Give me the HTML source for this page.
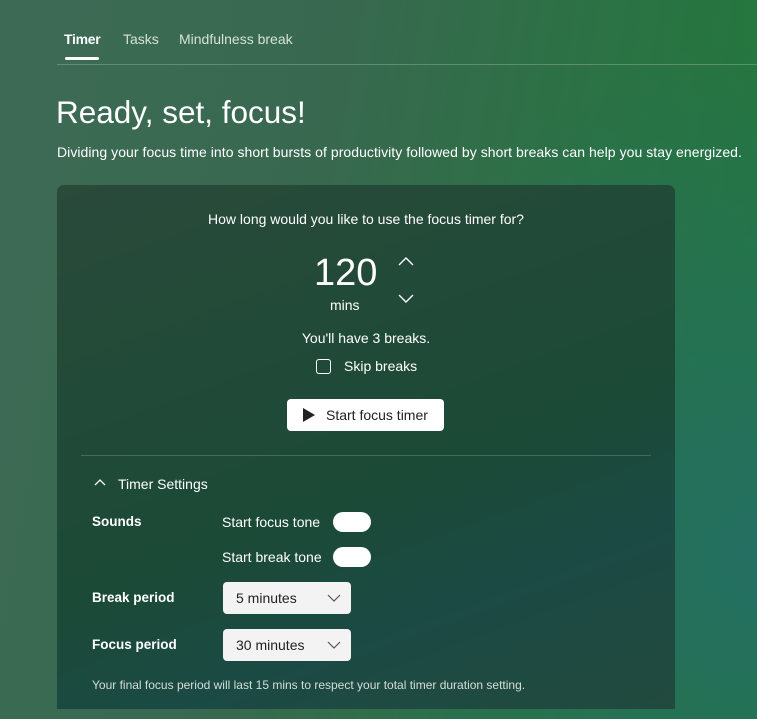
<!DOCTYPE html>
<html><head><meta charset="utf-8"><style>
*{margin:0;padding:0;box-sizing:border-box}
body{width:757px;height:719px;overflow:hidden;font-family:"Liberation Sans",sans-serif;color:#fff;
background:radial-gradient(ellipse 420px 520px at 757px 560px,rgba(36,110,100,0.95),rgba(36,110,100,0) 100%),
linear-gradient(100deg,#3d6a55 0%,#38694f 40%,#2b7244 70%,#21793a 100%);position:relative}
.abs{position:absolute}
.tab{position:absolute;top:31px;font-size:14px}
.line{position:absolute;left:57px;right:0;top:64px;height:1px;background:rgba(255,255,255,0.22)}
.card{position:absolute;left:57px;top:185px;width:618px;height:524px;border-radius:7px 7px 0 0;
background:linear-gradient(160deg,#2a4a3a 0%,#1b4a36 55%,#1b4a44 75%,#224a3e 100%)}
.toggle{position:absolute;width:38px;height:20px;border-radius:10px;background:#fff}
.sel{position:absolute;width:128px;height:32px;border-radius:4px;background:#f3f3f3;color:#222;font-size:14px;padding:8px 0 0 13px}
.lbl{position:absolute;font-size:13.5px;font-weight:bold}
.t13{position:absolute;font-size:14px;white-space:nowrap}
</style></head><body>
<div class="tab" style="left:64px;font-weight:bold;letter-spacing:-0.3px">Timer</div>
<div class="abs" style="left:65px;top:57px;width:34px;height:3px;border-radius:2px;background:#fff"></div>
<div class="tab" style="left:123px;color:#d5e2da">Tasks</div>
<div class="tab" style="left:179px;color:#d5e2da">Mindfulness break</div>
<div class="line"></div>
<div class="abs" style="left:56px;top:94px;font-size:31.5px">Ready, set, focus!</div>
<div class="abs" style="left:57px;top:144px;font-size:14px;letter-spacing:0.05px;white-space:nowrap">Dividing your focus time into short bursts of productivity followed by short breaks can help you stay energized.</div>
<div class="card">
  <div class="t13" style="left:0;width:618px;text-align:center;top:26px">How long would you like to use the focus timer for?</div>
  <div class="abs" style="left:257px;top:67px;font-size:38px;font-weight:300">120</div>
  <div class="t13" style="left:273px;top:112px">mins</div>
  <svg class="abs" style="left:340px;top:70px" width="18" height="50" viewBox="0 0 18 50" fill="none" stroke="#fff" stroke-width="1.4"><path d="M2 10 L9 3 L16 10"/><path d="M2 40 L9 47 L16 40"/></svg>
  <div class="t13" style="left:0;width:618px;text-align:center;top:145px">You'll have 3 breaks.</div>
  <div class="abs" style="left:259px;top:174px;width:15px;height:15px;border:1px solid #fff;border-radius:3px"></div>
  <div class="t13" style="left:287px;top:173px">Skip breaks</div>
  <div class="abs" style="left:230px;top:214px;width:157px;height:32px;background:#fff;border-radius:4px;color:#222;font-size:14px">
    <svg class="abs" style="left:16px;top:9px" width="12" height="14" viewBox="0 0 12 14"><path d="M0 0 L12 7 L0 14Z" fill="#222"/></svg>
    <span class="abs" style="left:39px;top:8px;white-space:nowrap">Start focus timer</span></div>
  <div class="abs" style="left:24px;top:270px;width:570px;height:1px;background:rgba(255,255,255,0.18)"></div>
  <svg class="abs" style="left:36px;top:292px" width="14" height="10" viewBox="0 0 14 10" fill="none" stroke="#fff" stroke-width="1.3"><path d="M2 8 L7 3 L12 8"/></svg>
  <div class="t13" style="left:61px;top:291px">Timer Settings</div>
  <div class="lbl" style="left:35px;top:329px">Sounds</div>
  <div class="t13" style="left:165px;top:329px">Start focus tone</div>
  <div class="toggle" style="left:276px;top:327px"></div>
  <div class="t13" style="left:165px;top:364px">Start break tone</div>
  <div class="toggle" style="left:276px;top:362px"></div>
  <div class="lbl" style="left:35px;top:405px">Break period</div>
  <div class="sel" style="left:166px;top:397px">5 minutes<svg class="abs" style="left:104px;top:12px" width="14" height="8" viewBox="0 0 14 8" fill="none" stroke="#555" stroke-width="1.2"><path d="M1 1 L7 7 L13 1"/></svg></div>
  <div class="lbl" style="left:35px;top:452px">Focus period</div>
  <div class="sel" style="left:166px;top:444px">30 minutes<svg class="abs" style="left:104px;top:12px" width="14" height="8" viewBox="0 0 14 8" fill="none" stroke="#555" stroke-width="1.2"><path d="M1 1 L7 7 L13 1"/></svg></div>
  <div class="abs" style="left:35px;top:493px;font-size:12px;color:#d5ded8;white-space:nowrap">Your final focus period will last 15 mins to respect your total timer duration setting.</div>
</div>
</body></html>
